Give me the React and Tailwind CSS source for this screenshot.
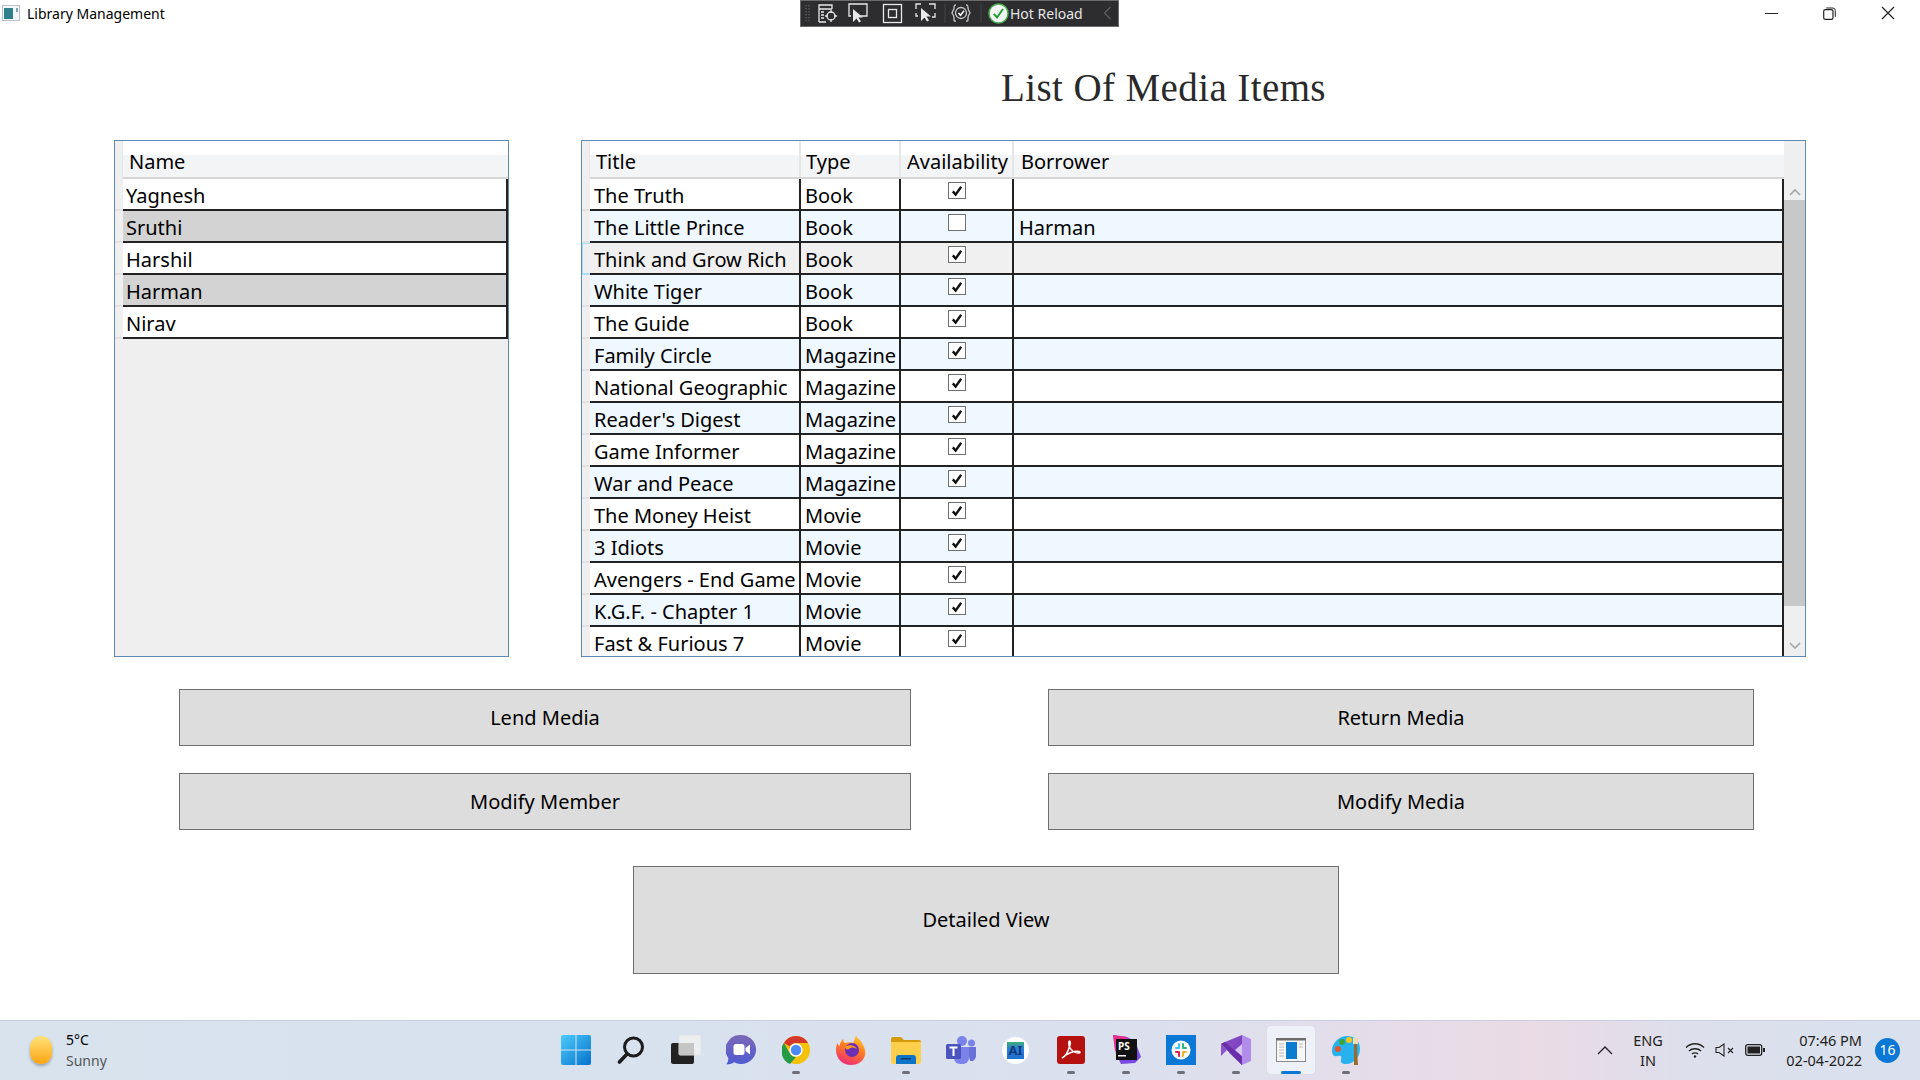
import React from 'react';

const MEMBERS = ['Yagnesh', 'Sruthi', 'Harshil', 'Harman', 'Nirav'];

const MEDIA = [
  ['The Truth', 'Book', true, ''],
  ['The Little Prince', 'Book', false, 'Harman'],
  ['Think and Grow Rich', 'Book', true, ''],
  ['White Tiger', 'Book', true, ''],
  ['The Guide', 'Book', true, ''],
  ['Family Circle', 'Magazine', true, ''],
  ['National Geographic', 'Magazine', true, ''],
  ["Reader's Digest", 'Magazine', true, ''],
  ['Game Informer', 'Magazine', true, ''],
  ['War and Peace', 'Magazine', true, ''],
  ['The Money Heist', 'Movie', true, ''],
  ['3 Idiots', 'Movie', true, ''],
  ['Avengers - End Game', 'Movie', true, ''],
  ['K.G.F. - Chapter 1', 'Movie', true, ''],
  ['Fast & Furious 7', 'Movie', true, ''],
];

const HEADER_BG = 'bg-[linear-gradient(#ffffff_0,#ffffff_40%,#f3f4f6_40%,#f3f4f6_100%)]';

const Checkbox = ({ checked }) => (
  <span className="mt-[3px] flex h-[17px] w-[18px] items-center justify-center border border-[#707070] bg-white">
    {checked && (
      <svg width="12" height="12" viewBox="0 0 12 12">
        <path d="M1.8 6.4 4.6 9.6 10.2 1.8" fill="none" stroke="#111" strokeWidth="2.4" />
      </svg>
    )}
  </span>
);

// Row-header strip on the left of every grid
const RowStrip = ({ focused }) => (
  <div className={`w-[8px] shrink-0 border-b-2 ${focused ? 'border-y border-l border-y-[#a8dcf5] border-l-[#a8dcf5]' : 'border-[#e2e2e2]'}`} />
);

const HeaderCell = ({ className = '', children }) => (
  <div className={`h-full border-r-2 border-[#e6e6e6] leading-[41px] ${className}`}>{children}</div>
);

const MemberGrid = () => (
  <div className="flex h-[517px] w-[395px] flex-col border border-[#5f8ab5] bg-[#efefef]">
    <div className="flex h-[38px] shrink-0">
      <div className="w-[8px] shrink-0 border-r border-[#e6e6e6]" />
      <div className={`flex-1 border-b-2 border-[#d6d6d6] pl-[6px] leading-[41px] ${HEADER_BG}`}>Name</div>
    </div>
    {MEMBERS.map((name, i) => (
      <div key={name} className="flex h-[32px] shrink-0">
        <RowStrip />
        <div className={`flex-1 border-r-2 border-b-2 border-[#222] pl-[3px] leading-[34px] ${i % 2 ? 'bg-[#d3d3d3]' : 'bg-white'}`}>
          {name}
        </div>
      </div>
    ))}
  </div>
);

const MediaRow = ({ item, index }) => {
  const [title, type, available, borrower] = item;
  const bg = index === 2 ? 'bg-[#f0f0f0]' : index % 2 ? 'bg-[#eff7ff]' : 'bg-white';
  const cell = 'h-full border-r-2 border-b-2 border-[#222] leading-[34px] whitespace-nowrap';
  return (
    <div className="flex h-[32px] shrink-0">
      <RowStrip focused={index === 2} />
      <div className={`flex flex-1 ${bg}`}>
        <div className={`${cell} w-[211px] pl-[4px]`}>{title}</div>
        <div className={`${cell} w-[100px] pl-[4px]`}>{type}</div>
        <div className={`${cell} flex w-[113px] justify-center`}><Checkbox checked={available} /></div>
        <div className={`${cell} flex-1 pl-[5px]`}>{borrower}</div>
      </div>
    </div>
  );
};

const ScrollBar = () => (
  <div className="flex w-[21px] shrink-0 flex-col bg-[#efefef]">
    <div className="flex h-[59px] shrink-0 items-end justify-center pb-[4px]">
      <svg width="12" height="8" viewBox="0 0 12 8"><path d="M1 7 6 2l5 5" fill="none" stroke="#a6a6a6" strokeWidth="1.6" /></svg>
    </div>
    <div className="h-[406px] shrink-0 bg-[#c8c8c8]" />
    <div className="flex flex-1 items-center justify-center pt-[30px]">
      <svg width="12" height="8" viewBox="0 0 12 8"><path d="M1 1l5 5 5-5" fill="none" stroke="#a6a6a6" strokeWidth="1.6" /></svg>
    </div>
  </div>
);

const MediaGrid = () => (
  <div className="flex h-[517px] w-[1225px] border border-[#5f8ab5]">
    <div className="flex min-w-0 flex-1 flex-col overflow-hidden bg-[#efefef]">
      <div className="flex h-[38px] shrink-0">
        <div className="w-[8px] shrink-0 border-r border-[#e6e6e6]" />
        <div className={`flex flex-1 border-b-2 border-[#d6d6d6] ${HEADER_BG}`}>
          <HeaderCell className="w-[211px] pl-[6px]">Title</HeaderCell>
          <HeaderCell className="w-[100px] pl-[5px]">Type</HeaderCell>
          <HeaderCell className="w-[113px] pl-[6px]">Availability</HeaderCell>
          <div className="pl-[7px] leading-[41px]">Borrower</div>
        </div>
      </div>
      {MEDIA.map((item, i) => (
        <MediaRow key={item[0]} item={item} index={i} />
      ))}
    </div>
    <ScrollBar />
  </div>
);

const ActionButton = ({ className = '', children }) => (
  <button className={`flex items-center justify-center border border-[#6e6e6e] bg-[#dddddd] ${className}`}>
    {children}
  </button>
);

/* Title bar */
const TitleBar = () => (
  <div className="flex h-[26px] shrink-0 items-center text-black">
    <div className="flex w-[800px] shrink-0 items-center pl-[2px]">
      <svg width="18" height="16" viewBox="0 0 18 16">
        <rect x="0.5" y="0.5" width="17" height="15" fill="#f4f6f7" stroke="#b9c0c6" />
        <rect x="2" y="3" width="9" height="11" fill="#2f7f8c" />
        <rect x="14" y="3" width="2" height="4" fill="#7fa3b5" />
      </svg>
      <span className="ml-[7px] font-['Noto_Sans'] text-[14px]">Library Management</span>
    </div>
    <HotReloadBar />
    <div className="flex flex-1 items-center justify-end">
      <svg width="13" height="13" viewBox="0 0 13 13" className="mr-[45px]"><path d="M0 6.5h13" stroke="#222" strokeWidth="1" /></svg>
      <svg width="13" height="13" viewBox="0 0 13 13" className="mr-[45px]">
        <rect x="0.7" y="2.7" width="9.3" height="9.6" rx="1.6" fill="none" stroke="#222" strokeWidth="1.2" />
        <path d="M3.2 1h6.6A2.5 2.5 0 0 1 12.3 3.5v6.3" fill="none" stroke="#222" strokeWidth="1" />
      </svg>
      <svg width="14" height="14" viewBox="0 0 14 14" className="mr-[25px]"><path d="M1 1l12 12M13 1 1 13" stroke="#222" strokeWidth="1.2" /></svg>
    </div>
  </div>
);

const HotReloadBar = () => (
  <div className="flex h-[27px] w-[319px] shrink-0 items-center border border-[#6a6a6a] bg-[#2d2d30] pl-[4px]">
    <svg width="183" height="22" viewBox="0 0 183 22" fill="none" stroke="#e8e8e8" strokeWidth="1.3" className="shrink-0">
      <path d="M1 3v16M4 3v16" stroke="#555" strokeWidth="1.5" strokeDasharray="1.5 1.5" />
      <g transform="translate(13 0)">
        <path d="M1 20V3h13v4M1 7h13M3 10h3M3 13h3M3 16h3M1 20h7" />
        <circle cx="13" cy="14" r="4" />
        <path d="M13 8v3M13 17v3M7 14h3M16 14h3" />
        <path d="M33 14h-2V2h18v12h-7" />
        <path d="M35 7v13l3.5-3.5 2.5 4 2-1-2.5-4h4.5z" fill="#e8e8e8" stroke="none" />
        <rect x="65.5" y="2.5" width="18" height="18" />
        <rect x="70.5" y="7.5" width="8" height="8" />
        <path d="M98 7V2h5M111 2h6v5M117 11v4h-3M98 11v3h2" />
        <path d="M103 6v13l3.500-3.500 2.500 4 2-1-2.500-4h4.500z" fill="#e8e8e8" stroke="none" />
        <path d="M127 2v19" stroke="#444" strokeWidth="1" />
        <path d="M138 3c-2 0-2 1-2 3s-2 4-2 5 2 1 2 5 0 3 2 3M148 3c2 0 2 1 2 3s2 4 2 5-2 1-2 5 0 3-2 3" stroke="#c8c8c8" />
        <circle cx="143" cy="11" r="5.500" stroke="#c8c8c8" />
        <path d="M140.500 11l2 2.300 3.500-4.600" stroke="#fff" strokeWidth="1.500" />
        <path d="M163 2v19" stroke="#444" strokeWidth="1" />
      </g>
    </svg>
    <svg width="21" height="21" viewBox="0 0 21 21" className="shrink-0">
      <circle cx="10.5" cy="10.5" r="9.5" fill="#f4f4f4" stroke="#4caf50" strokeWidth="1.5" />
      <path d="M5.8 10.8 9 14.500l6-8.500" fill="none" stroke="#1b9e2e" strokeWidth="2" />
    </svg>
    <span className="ml-[1px] font-['Noto_Sans'] text-[14px] text-[#e4e4e4]">Hot Reload</span>
    <svg width="9" height="14" viewBox="0 0 9 14" className="ml-[20px]"><path d="M7.500 1 1.500 7l6 6" fill="none" stroke="#5f5f5f" strokeWidth="1.300" /></svg>
  </div>
);

/* Taskbar icons */
const WindowsIcon = () => (
  <svg width="30" height="30" viewBox="0 0 30 30">
    <defs>
      <linearGradient id="win" x1="0" y1="0" x2="1" y2="1"><stop offset="0" stopColor="#4ccbfb" /><stop offset="1" stopColor="#0672cc" /></linearGradient>
    </defs>
    <path d="M2 0h12.500v14.500H0V2a2 2 0 0 1 2-2zM15.500 0H28a2 2 0 0 1 2 2v12.500H15.500zM0 15.500h14.500V30H2a2 2 0 0 1-2-2zM15.500 15.500H30V28a2 2 0 0 1-2 2H15.500z" fill="url(#win)" />
  </svg>
);

const SearchIcon = () => (
  <svg width="28" height="28" viewBox="0 0 28 28" fill="none" stroke="#1c1c1c">
    <circle cx="16.500" cy="11" r="9" strokeWidth="3" />
    <path d="M10 18 2.500 26" strokeWidth="3.600" strokeLinecap="round" />
  </svg>
);

const TaskViewIcon = () => (
  <svg width="30" height="30" viewBox="0 0 30 30">
    <rect x="0" y="8" width="23" height="21" rx="2" fill="#222" />
    <rect x="8" y="0" width="22" height="20" rx="1" fill="#f0f0f0" fillOpacity="0.85" stroke="#e3e3e3" />
    <rect x="8" y="8" width="15" height="12" fill="#c6c6c6" />
  </svg>
);

const MeetIcon = () => (
  <svg width="30" height="30" viewBox="0 0 30 30">
    <defs>
      <linearGradient id="meet" x1="0" y1="0" x2="0" y2="1"><stop offset="0" stopColor="#7b68b8" /><stop offset="1" stopColor="#4f5bd0" /></linearGradient>
    </defs>
    <path d="M15 0a15 14.500 0 1 1-7 27.300C6 29 3 29.500 0 29.500c1.500-1.500 2.500-3.500 2.300-6.500A15 14.500 0 0 1 15 0z" fill="url(#meet)" />
    <rect x="7.500" y="9" width="11" height="11" rx="2.500" fill="#fff" />
    <path d="M19.500 13l4.500-3.500v10L19.500 16z" fill="#fff" />
  </svg>
);

const ChromeIcon = () => (
  <svg width="28" height="28" viewBox="0 0 28 28">
    <circle cx="14" cy="14" r="14" fill="#f4c20d" />
    <path d="M14 0a14 14 0 0 1 12.100 7H14a7 7 0 0 0-6.100 3.500L1.900 7A14 14 0 0 1 14 0z" fill="#d6372c" />
    <path d="M1.900 7 7.900 17.500a7 7 0 0 0 6.100 3.500L8 28A14 14 0 0 1 1.900 7z" fill="#269b47" />
    <path d="M14 28l6-10.500A7 7 0 0 0 21 14a7 7 0 0 0-1-3.500h7A14 14 0 0 1 14 28z" fill="#f4c20d" />
    <circle cx="14" cy="14" r="6.700" fill="#fff" />
    <circle cx="14" cy="14" r="5.200" fill="#4c8bf5" />
  </svg>
);

const FirefoxIcon = () => (
  <svg width="30" height="30" viewBox="0 0 30 30">
    <defs>
      <linearGradient id="ff" x1="0.700" y1="0" x2="0.300" y2="1"><stop offset="0" stopColor="#ffcb2e" /><stop offset="0.450" stopColor="#ff7a1f" /><stop offset="1" stopColor="#ee2a7b" /></linearGradient>
    </defs>
    <path d="M20 0c.500 3 4 4 6 8 3 5 4 9 2.800 13C27 27 21 30 15 30 7 30 0 24 0 15c0-3 .800-6 1.500-7 .3 1.500 1 2.500 2 3 .500-3 2-6 4-7-.500 2 0 3 1.500 4 3-1 6-1 8 0 1-2 2-5 3-8z" fill="url(#ff)" />
    <circle cx="16" cy="15" r="7" fill="#6b2fb5" />
    <path d="M9 12c4-3 10-2 12 2-3-2-6-2-8 0-2 1-3 0-4-2z" fill="#ff9a1f" />
  </svg>
);

const FolderIcon = () => (
  <svg width="30" height="27" viewBox="0 0 30 27">
    <path d="M0 2a2 2 0 0 1 2-2h8l3 3h15a2 2 0 0 1 2 2v3H0z" fill="#d69b0d" />
    <path d="M0 5h30v20a2 2 0 0 1-2 2H2a2 2 0 0 1-2-2z" fill="#fdcf4b" />
    <path d="M5 27v-6a3 3 0 0 1 3-3h14a3 3 0 0 1 3 3v6z" fill="#0d74c8" />
    <rect x="10" y="21" width="10" height="1.500" fill="#0a3f70" />
  </svg>
);

const TeamsIcon = () => (
  <svg width="30" height="28" viewBox="0 0 30 28">
    <circle cx="25.500" cy="7" r="3.500" fill="#7b83eb" />
    <circle cx="16" cy="5" r="5" fill="#7b83eb" />
    <path d="M21 11h9v9a5 5 0 0 1-6 5z" fill="#6a72d8" />
    <path d="M8 11h15v11a6 6 0 0 1-6 6h-3a6 6 0 0 1-6-6z" fill="#7b83eb" />
    <rect x="0" y="8" width="15" height="15" rx="1.500" fill="#4b53bc" />
    <path d="M3.500 11.500h8M7.500 11.500V20" stroke="#fff" strokeWidth="2" />
  </svg>
);

const AzureIcon = () => (
  <div className="flex h-[27px] w-[27px] items-center justify-center rounded-full bg-white">
    <span className="bg-[linear-gradient(#3fae7a_0,#2a7fd8_40%,#1f6fd0_100%)] px-[1px] font-['Noto_Sans'] text-[13px] font-bold leading-[17px] text-[#123a7a]">AI</span>
  </div>
);

const AcrobatIcon = () => (
  <svg width="28" height="28" viewBox="0 0 28 28">
    <rect width="28" height="28" rx="3" fill="#b5120f" />
    <path d="M5 22c3-1 6-6 8-13 .500-2 .500-4-.500-4s-1 3 0 6c2 4 5 6 9 6 2 0 2-1 .500-1.500C18 14.500 10 17 5 22z" fill="none" stroke="#fff" strokeWidth="1.500" />
  </svg>
);

const PhpStormIcon = () => (
  <svg width="30" height="30" viewBox="0 0 30 30">
    <path d="M2 0l14 2 8 4 6 16-6 6-14 1-5-10z" fill="#7b4ae0" />
    <path d="M2 0l14 2 2 8-14 6z" fill="#ea2f88" />
    <rect x="5" y="4" width="21" height="21" fill="#111" />
    <text x="7" y="15" fontFamily="'Noto Sans', sans-serif" fontSize="10" fontWeight="700" fill="#fff">PS</text>
    <rect x="7" y="20" width="8" height="1.500" fill="#fff" />
  </svg>
);

const SlackIcon = () => (
  <svg width="30" height="30" viewBox="0 0 30 30">
    <rect width="30" height="30" fill="#0a78d4" />
    <circle cx="15" cy="15" r="9.500" fill="#fff" />
    <path d="M13 9v4M10 13h3" stroke="#36c5f0" strokeWidth="2" strokeLinecap="round" />
    <path d="M17 9v4M17 13h3" stroke="#2eb67d" strokeWidth="2" strokeLinecap="round" />
    <path d="M13 17v4M10 17h3" stroke="#e01e5a" strokeWidth="2" strokeLinecap="round" />
    <path d="M17 17v4M17 17h3" stroke="#ecb22e" strokeWidth="2" strokeLinecap="round" />
  </svg>
);

const VisualStudioIcon = () => (
  <svg width="30" height="30" viewBox="0 0 30 30">
    <path d="M21 0l9 4v22l-9 4-13-12z" fill="#b18ce8" />
    <path d="M21 0v30L0 9l4-2z" fill="#7d3fc0" opacity="0.95" />
    <path d="M0 9l4-2 17 15v8z" fill="#6a2fa8" />
    <path d="M0 21V9l6 6z" fill="#8a55cc" />
    <path d="M21 9v12l-7-6z" fill="#d8c5f5" />
  </svg>
);

const AppIcon = () => (
  <svg width="30" height="24" viewBox="0 0 30 24">
    <rect x="0.500" y="0.500" width="29" height="23" fill="#f7f7f7" stroke="#8a8a8a" />
    <rect x="0" y="0" width="30" height="2.500" fill="#6d6d6d" />
    <rect x="10" y="4" width="11" height="17" fill="#0d7bd0" />
    <path d="M3 6h5M3 9h5M3 12h5M3 15h5M3 18h5M23 6h4M23 9h4" stroke="#b7b7b7" />
  </svg>
);

const PaintIcon = () => (
  <svg width="28" height="30" viewBox="0 0 28 30">
    <path d="M15 1C7 1 0 8 0 16c0 5 4 6 6 5 3-1 4 1 3 4-1 3 2 4 5 4 8 0 14-7 14-15S23 1 15 1z" fill="#27b1ee" />
    <circle cx="6" cy="14" r="3" fill="#e2552c" />
    <circle cx="10" cy="7" r="3" fill="#3aa53c" />
    <circle cx="17" cy="5" r="3" fill="#f5c518" />
    <path d="M22 8h3v8l1 14h-4z" fill="#9a6a2d" />
    <rect x="21" y="3" width="5" height="6" fill="#f0d9b0" />
  </svg>
);

const TaskbarSlot = ({ dot, active, children }) => (
  <div className="flex w-[55px] shrink-0 justify-center">
    <div className={`relative flex h-[48px] w-[48px] items-center justify-center ${active ? 'rounded-[4px] bg-[#eef1f8] shadow-[0_0_1px_#c3c7d2]' : ''}`}>
      {children}
      {dot && <span className="absolute bottom-[0px] h-[3px] w-[8px] rounded-full bg-[#6f6f78]" />}
      {active && <span className="absolute bottom-[0px] h-[3px] w-[20px] rounded-full bg-[#0a78d4]" />}
    </div>
  </div>
);

const Taskbar = () => (
  <div className="flex h-[60px] shrink-0 items-center border-t border-[#c7d0dc] bg-[linear-gradient(90deg,#d8e3ee_0%,#d8e2ee_35%,#dce0ee_60%,#e5dde9_72%,#eadbe5_80%,#dddfec_88%,#d9e1ee_100%)] pb-[1px] font-['Noto_Sans'] text-black">
    <div className="flex w-[548px] shrink-0 items-center pl-[30px]">
      <div className="h-[28px] w-[22px] rounded-full bg-[linear-gradient(#fde27a,#ffa412)] shadow-[0_2px_3px_#9aa3ad]" />
      <div className="ml-[14px] text-[14px] leading-[21px]">
        <div>5°C</div>
        <div className="text-[#555]">Sunny</div>
      </div>
    </div>
    <div className="flex w-[825px] shrink-0 items-center">
      <TaskbarSlot><WindowsIcon /></TaskbarSlot>
      <TaskbarSlot><SearchIcon /></TaskbarSlot>
      <TaskbarSlot><TaskViewIcon /></TaskbarSlot>
      <TaskbarSlot><MeetIcon /></TaskbarSlot>
      <TaskbarSlot dot><ChromeIcon /></TaskbarSlot>
      <TaskbarSlot><FirefoxIcon /></TaskbarSlot>
      <TaskbarSlot dot><FolderIcon /></TaskbarSlot>
      <TaskbarSlot><TeamsIcon /></TaskbarSlot>
      <TaskbarSlot><AzureIcon /></TaskbarSlot>
      <TaskbarSlot dot><AcrobatIcon /></TaskbarSlot>
      <TaskbarSlot dot><PhpStormIcon /></TaskbarSlot>
      <TaskbarSlot dot><SlackIcon /></TaskbarSlot>
      <TaskbarSlot dot><VisualStudioIcon /></TaskbarSlot>
      <TaskbarSlot active><AppIcon /></TaskbarSlot>
      <TaskbarSlot dot><PaintIcon /></TaskbarSlot>
    </div>
    <div className="flex flex-1 items-center pl-[224px] text-[14.5px] leading-[20px] text-[#222]">
      <svg width="16" height="10" viewBox="0 0 16 10"><path d="M1 9l7-7 7 7" fill="none" stroke="#222" strokeWidth="1.300" /></svg>
      <div className="ml-[21px] w-[28px] whitespace-nowrap text-center leading-[20px]">
        <div className="-mx-[2px]">ENG</div>
        <div>IN</div>
      </div>
      <svg width="20" height="16" viewBox="0 0 20 16" fill="none" stroke="#222" strokeWidth="1.300" className="ml-[23px]">
        <path d="M1 5.500c5-5 13-5 18 0M4 9c3-3 9-3 12 0M7 12c1.500-1.500 4.500-1.500 6 0" />
        <circle cx="10" cy="14.500" r="1.200" fill="#222" stroke="none" />
      </svg>
      <svg width="20" height="14" viewBox="0 0 20 14" fill="none" stroke="#222" strokeWidth="1.100" className="ml-[10px]">
        <path d="M1 4.500h3L9 1v12L4 9.500H1z" />
        <path d="M13 5l5 5M18 5l-5 5" />
      </svg>
      <svg width="20" height="12" viewBox="0 0 20 12" className="ml-[10px]">
        <rect x="0.700" y="0.700" width="16" height="10.600" rx="2" fill="none" stroke="#222" strokeWidth="1.300" />
        <rect x="2.500" y="2.500" width="12.500" height="7" fill="#222" />
        <rect x="18" y="4" width="2" height="4" fill="#222" />
      </svg>
      <div className="ml-[21px] flex w-[76px] flex-col items-end whitespace-nowrap">
        <div>07:46 PM</div>
        <div>02-04-2022</div>
      </div>
      <div className="ml-[13px] flex h-[25px] w-[25px] items-center justify-center rounded-full bg-[#0a78d4] text-[14px] text-white">16</div>
    </div>
  </div>
);

export default function App() {
  return (
    <div className="flex h-[1080px] w-[1920px] flex-col overflow-hidden bg-white font-['Noto_Sans',sans-serif] text-[20px] text-black">
      <TitleBar />
      <div className="flex-1">
        <h1 className="mt-[40px] pl-[1001px] font-['Liberation_Serif',serif] text-[39px] font-normal leading-[44px] tracking-[0.4px] text-[#2a2a2a]">List Of Media Items</h1>
        <div className="mt-[30px] flex gap-[72px] pl-[114px]">
          <MemberGrid />
          <MediaGrid />
        </div>
        <div className="mt-[32px] flex pl-[179px]">
          <ActionButton className="h-[57px] w-[732px]">Lend Media</ActionButton>
          <ActionButton className="ml-[137px] h-[57px] w-[706px]">Return Media</ActionButton>
        </div>
        <div className="mt-[27px] flex pl-[179px]">
          <ActionButton className="h-[57px] w-[732px]">Modify Member</ActionButton>
          <ActionButton className="ml-[137px] h-[57px] w-[706px]">Modify Media</ActionButton>
        </div>
        <div className="mt-[36px] pl-[633px]">
          <ActionButton className="h-[108px] w-[706px]">Detailed View</ActionButton>
        </div>
      </div>
      <Taskbar />
    </div>
  );
}
